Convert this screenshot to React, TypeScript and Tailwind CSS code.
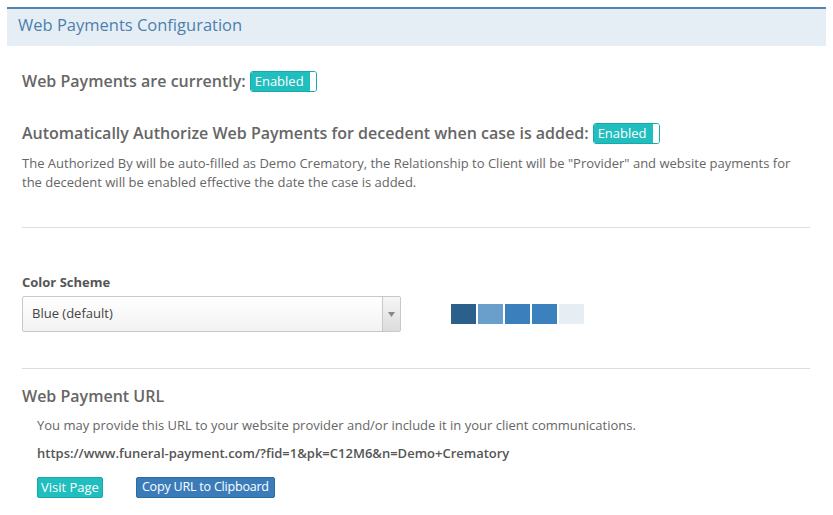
import React from "react";

function Toggle() {
  return (
    <span className="inline-flex h-[21px] w-[67px] items-stretch overflow-hidden rounded-[3px] border border-[#1aa9a9] bg-white align-middle">
      <span className="flex flex-1 items-center justify-center bg-[#20bebe] pr-[2px] text-[13px] font-normal leading-none text-white">
        Enabled
      </span>
      <span className="w-[6px] bg-white" />
    </span>
  );
}

export default function App() {
  return (
    <div
      className="h-[515px] w-[833px] bg-white text-[#666]"
      style={{ fontFamily: '"Open Sans", "Noto Sans", sans-serif' }}
    >
      <div className="pt-[7px] pl-[7px] pr-[7px]">
        <div className="flex h-[39px] items-center border-t-2 border-[#5585ac] bg-[#e6eef5] pb-[4px] pl-[11px] text-[16.5px] text-[#4d7fae]">
          Web Payments Configuration
        </div>
      </div>

      <div className="px-[22px]">
        <div className="mt-[24px] flex h-[22px] items-center gap-[4px] text-[16px] font-semibold leading-[22px] text-[#666]">
          <span>Web Payments are currently:</span>
          <Toggle />
        </div>

        <div className="mt-[30px] flex h-[22px] items-center gap-[4px] text-[16px] font-semibold leading-[22px] text-[#666]">
          <span>Automatically Authorize Web Payments for decedent when case is added:</span>
          <Toggle />
        </div>

        <p className="mt-[10px] w-[790px] text-[13px] leading-[19px] text-[#666]">
          The Authorized By will be auto-filled as Demo Crematory, the Relationship to Client will be "Provider" and website payments for the decedent will be enabled effective the date the case is added.
        </p>

        <div className="mt-[35px] h-px w-[788px] bg-[#ddd]" />

        <div className="mt-[45px] text-[13px] font-bold leading-[18px] text-[#555]">Color Scheme</div>
        <div className="mt-[5px] flex items-center">
          <div className="flex h-[36px] w-[379px] items-stretch rounded-[2px] border border-[#c8c8c8] bg-gradient-to-b from-white to-[#f2f2f2]">
            <div className="flex flex-1 items-center pl-[9px] text-[13px] text-[#444]">Blue (default)</div>
            <div className="flex w-[18px] items-center justify-center border-l border-[#c8c8c8] bg-gradient-to-b from-[#f6f6f6] to-[#dcdcdc]">
              <svg width="7" height="5" viewBox="0 0 7 5">
                <path d="M0 0 L7 0 L3.5 5 Z" fill="#888" />
              </svg>
            </div>
          </div>
          <div className="ml-[50px] flex gap-[2px]">
            <div className="h-[20px] w-[25px] bg-[#2b5f8c]" />
            <div className="h-[20px] w-[25px] bg-[#6a9fcc]" />
            <div className="h-[20px] w-[25px] bg-[#3b80bc]" />
            <div className="h-[20px] w-[25px] bg-[#3a81bd]" />
            <div className="h-[20px] w-[25px] bg-[#e6eef4]" />
          </div>
        </div>

        <div className="mt-[36px] h-px w-[788px] bg-[#ddd]" />

        <div className="mt-[16px] text-[16px] font-semibold leading-[22px] text-[#666]">Web Payment URL</div>
        <div className="pl-[15px]">
          <div className="mt-[9px] text-[13px] leading-[18px] text-[#666]">
            You may provide this URL to your website provider and/or include it in your client communications.
          </div>
          <div className="mt-[10px] text-[13px] font-semibold leading-[18px] text-[#555]">
            https://www.funeral-payment.com/?fid=1&amp;pk=C12M6&amp;n=Demo+Crematory
          </div>
          <div className="mt-[15px] flex gap-[33px]">
            <button className="h-[21px] rounded-[2px] border border-[#1aa8a8] bg-[#20bebe] px-[3px] text-[13px] leading-none text-white">
              Visit Page
            </button>
            <button className="h-[21px] rounded-[2px] border border-[#2d6aa0] bg-[#3a7cba] px-[5px] text-[12.5px] tracking-[-0.2px] leading-none text-white">
              Copy URL to Clipboard
            </button>
          </div>
        </div>
      </div>
    </div>
  );
}
